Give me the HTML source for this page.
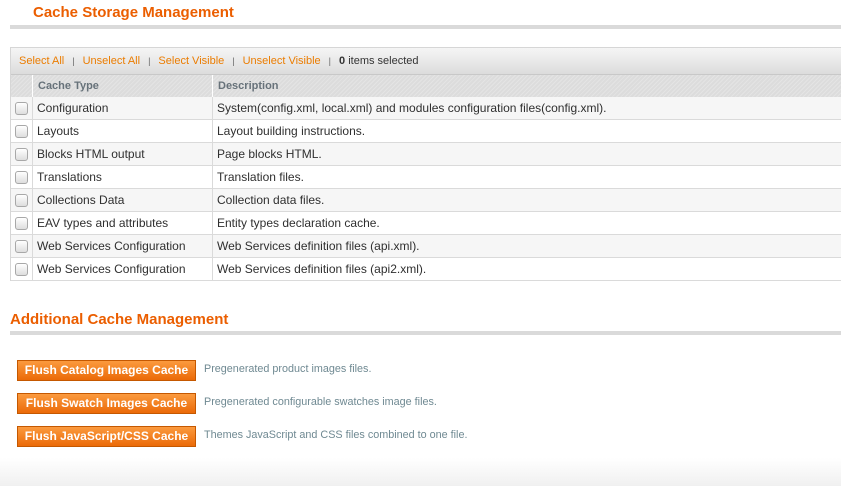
<!DOCTYPE html>
<html><head><style>
body{margin:0;width:841px;height:486px;overflow:hidden;background:#fff;font-family:"Liberation Sans",Arial,sans-serif;font-size:12px;color:#2f2f2f;position:relative}
.h{position:absolute;color:#eb5e00;font-weight:bold;font-size:15px}
.bar{position:absolute;left:10px;right:0;height:4px;background:#dadada}
.grid{position:absolute;left:10px;top:47px;width:840px;border:1px solid #d6d6d6;border-right:none;border-bottom:none}
.tb{height:26px;background:linear-gradient(#f5f5f5,#dcdcdc);border-bottom:1px solid #c8c8c8;line-height:26px;font-size:11px;padding-left:8px;color:#333}
.tb a{color:#eb7c00}
.tb .s{color:#666;margin:0 8px;font-size:9px}
table{border-collapse:collapse;width:100%}
th{height:22px;background:repeating-linear-gradient(135deg,#e4e4e4 0 1px,#dcdcdc 1px 3px);text-align:left;font-size:11px;color:#67727a;padding:0 0 0 5px;border-right:1px solid #fff}
td{height:22px;border-bottom:1px solid #dadada;border-right:1px solid #dadada;padding:0 0 0 4px;font-size:12px}
tr.a td{background:#f6f6f6}
.cb{display:inline-block;width:11px;height:11px;border:1px solid #a8a8a8;border-radius:3px;background:linear-gradient(#fff,#ddd);vertical-align:middle}
.btn{position:absolute;left:17px;width:177px;height:19px;border:1px solid #c55800;background:linear-gradient(#fb9a3e,#eb6a08);color:#fff;font-weight:bold;font-size:12px;line-height:19px;text-align:center}
.d{position:absolute;left:204px;color:#6f8992;font-size:10.8px}
.foot{position:absolute;left:0;right:0;top:458px;height:28px;background:linear-gradient(#fff,#f0f0f0)}
</style></head><body>
<div class="h" style="left:33px;top:4px">Cache Storage Management</div>
<div class="bar" style="top:25px"></div>
<div class="grid">
<div class="tb"><a>Select All</a><span class="s">|</span><a>Unselect All</a><span class="s">|</span><a>Select Visible</a><span class="s">|</span><a>Unselect Visible</a><span class="s">|</span><b>0</b> items selected</div>
<table>
<tr><th style="width:16px"></th><th style="width:174px">Cache Type</th><th>Description</th></tr>
<tr class="a"><td><span class="cb"></span></td><td>Configuration</td><td>System(config.xml, local.xml) and modules configuration files(config.xml).</td></tr>
<tr><td><span class="cb"></span></td><td>Layouts</td><td>Layout building instructions.</td></tr>
<tr class="a"><td><span class="cb"></span></td><td>Blocks HTML output</td><td>Page blocks HTML.</td></tr>
<tr><td><span class="cb"></span></td><td>Translations</td><td>Translation files.</td></tr>
<tr class="a"><td><span class="cb"></span></td><td>Collections Data</td><td>Collection data files.</td></tr>
<tr><td><span class="cb"></span></td><td>EAV types and attributes</td><td>Entity types declaration cache.</td></tr>
<tr class="a"><td><span class="cb"></span></td><td>Web Services Configuration</td><td>Web Services definition files (api.xml).</td></tr>
<tr><td><span class="cb"></span></td><td>Web Services Configuration</td><td>Web Services definition files (api2.xml).</td></tr>
</table></div>
<div class="h" style="left:10px;top:311px">Additional Cache Management</div>
<div class="bar" style="top:331px"></div>
<div class="btn" style="top:360px">Flush Catalog Images Cache</div><div class="d" style="top:363px">Pregenerated product images files.</div>
<div class="btn" style="top:393px">Flush Swatch Images Cache</div><div class="d" style="top:396px">Pregenerated configurable swatches image files.</div>
<div class="btn" style="top:426px">Flush JavaScript/CSS Cache</div><div class="d" style="top:429px">Themes JavaScript and CSS files combined to one file.</div>
<div class="foot"></div>
</body></html>
